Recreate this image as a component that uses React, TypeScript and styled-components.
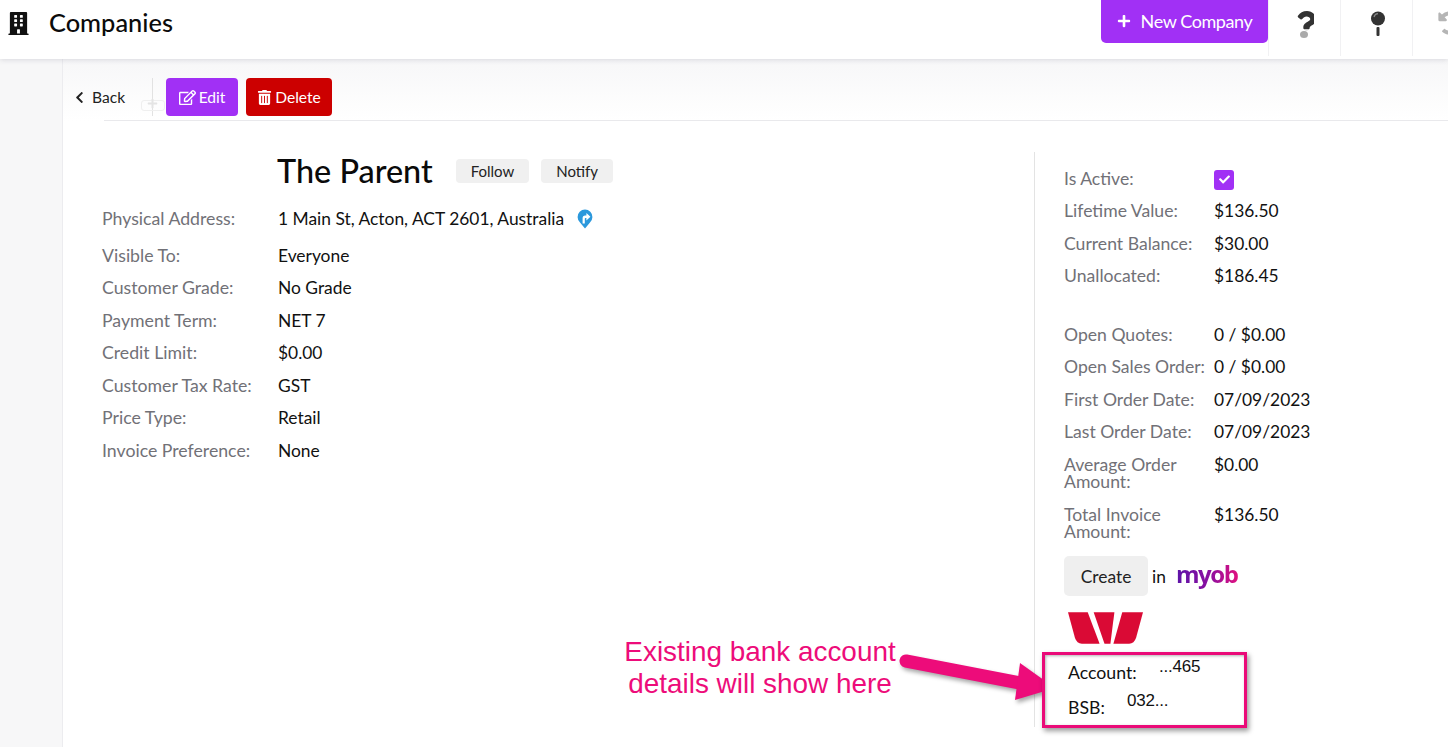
import React from "react";
import styled, { createGlobalStyle } from "styled-components";
import { FaBuilding, FaRegEdit, FaTrashAlt, FaChevronLeft, FaPlus, FaQuestion, FaUndoAlt, FaCheck } from "react-icons/fa";

const Global = createGlobalStyle`
  html, body { margin: 0; padding: 0; background: #f7f7f8; }
  body { font-family: Lato, "Liberation Sans", sans-serif; color: #111; overflow: hidden; }
  * { box-sizing: border-box; }
`;

const Page = styled.div`
  position: relative;
  width: 1448px;
  height: 747px;
  overflow: hidden;
  display: flex;
  flex-direction: column;
`;

const Header = styled.header`
  height: 59px;
  flex: none;
  background: #fff;
  box-shadow: 0 1px 5px rgba(60, 60, 90, 0.16);
  display: flex;
  align-items: flex-start;
  padding-left: 7px;
  position: relative;
  z-index: 2;
`;

const BrandIcon = styled.div`
  width: 20px;
  margin-top: 12px;
  font-size: 23px;
  line-height: 0;
  color: #111;
`;

const Title = styled.h1`
  margin: 7px 0 0 22px;
  font-size: 25.4px;
  line-height: 30px;
  font-weight: 500;
  color: #0b0b0b;
  flex: 1;
`;

const NewButton = styled.button`
  width: 167px;
  height: 43px;
  flex: none;
  border: 0;
  border-radius: 0 0 5px 5px;
  background: #a130f5;
  color: #fff;
  font: 400 18px Lato, sans-serif;
  letter-spacing: -0.4px;
  display: flex;
  align-items: center;
  justify-content: center;
  gap: 10px;
  padding: 0 0 2px;
`;

const HeaderCell = styled.div<{ $tone: string; $clip?: boolean }>`
  width: ${p => (p.$clip ? 36 : 72)}px;
  flex: none;
  height: 56px;
  border-left: 1px solid #f1f1f3;
  display: flex;
  justify-content: ${p => (p.$clip ? "flex-start" : "center")};
  padding: ${p => (p.$clip ? "11px 0 0 25px" : "11px 0 0 0")};
  color: ${p => p.$tone};
  font-size: 25px;
  line-height: 0;
  align-items: flex-start;
  overflow: hidden;
  & > svg { flex: none; }
`;

const QuestionStack = styled.div`
  position: relative;
  width: 19px;
  height: 27px;
  overflow: hidden;
`;

const QuestionDot = styled.span`
  position: absolute;
  left: 5px;
  bottom: 0;
  width: 8px;
  height: 7px;
  border-radius: 50%;
  background: #aaa;
`;

const Body = styled.div`
  flex: 1;
  display: flex;
  min-height: 0;
`;

const Gutter = styled.div`
  width: 62px;
  flex: none;
  background: #f7f7f8;
`;

const Panel = styled.main`
  flex: 1;
  background: #fff;
  border-left: 1px solid #ececef;
  display: flex;
  flex-direction: column;
  min-width: 0;
`;

const Toolbar = styled.div`
  height: 62px;
  flex: none;
  position: relative;
  background: linear-gradient(#f7f7f8, #ffffff);
  display: flex;
  align-items: flex-start;
  padding: 19px 0 0 10px;
`;

const ToolbarRule = styled.div`
  position: absolute;
  left: 41px;
  right: 0;
  bottom: 0;
  border-bottom: 1px solid #e9e9ec;
`;

const BackLink = styled.div`
  width: 93px;
  height: 38px;
  display: flex;
  align-items: center;
  gap: 6px;
  font-size: 15.6px;
  color: #222;
  position: relative;
`;

const GhostDivider = styled.span`
  position: absolute;
  left: 79px;
  top: 0;
  height: 38px;
  border-left: 1px solid #e2e2e2;
`;

const GhostBox = styled.span`
  position: absolute;
  left: 68px;
  top: 22px;
  width: 24px;
  height: 11px;
  border: 1px solid #efefef;
  border-radius: 3px;
`;

const GhostPlus = styled.span`
  position: absolute;
  left: 74px;
  top: 20px;
  color: #e4e4e4;
  font-size: 11px;
  line-height: 0;
`;

const ActionButton = styled.button<{ $bg: string; $w: number }>`
  width: ${p => p.$w}px;
  height: 38px;
  margin-right: 8px;
  border: 0;
  border-radius: 4px;
  background: ${p => p.$bg};
  color: #fff;
  font: 400 15.6px Lato, sans-serif;
  display: flex;
  align-items: center;
  justify-content: center;
  gap: 3px;
  padding: 0;
`;

const Content = styled.div`
  flex: 1;
  display: flex;
  min-height: 0;
`;

const LeftColumn = styled.section`
  width: 971px;
  flex: none;
  padding: 31px 0 0 39px;
`;

const NameRow = styled.div`
  display: flex;
  align-items: center;
  height: 38px;
  margin: 0 0 8.5px 175px;
`;

const Name = styled.h2`
  margin: 0 23px 0 0;
  font-size: 32.4px;
  line-height: 38px;
  font-weight: 500;
  color: #0a0a0a;
`;

const Pill = styled.button`
  height: 24px;
  margin-right: 12px;
  padding: 0 15px;
  border: 0;
  border-radius: 4px;
  background: #f0f0f0;
  color: #222;
  font: 400 15px Lato, sans-serif;
`;

const DetailRow = styled.div<{ $tall?: boolean }>`
  display: flex;
  align-items: center;
  height: ${p => (p.$tall ? 40.5 : 32.5)}px;
`;

const DetailLabel = styled.span`
  width: 176px;
  flex: none;
  font-size: 17.7px;
  color: #717177;
`;

const DetailValue = styled.span`
  color: #111;
  font-size: 17.4px;
  display: flex;
  align-items: center;
  gap: 13px;
`;

const RightColumn = styled.aside`
  height: 575px;
  margin-top: 31px;
  border-left: 1px solid #e3e3e3;
  padding: 10px 0 0 29px;
  flex: 1;
`;

const StatRow = styled.div<{ $h?: number; $gap?: number }>`
  display: flex;
  align-items: ${p => (p.$h ? "flex-start" : "center")};
  height: ${p => p.$h ?? 32.5}px;
  margin-top: ${p => p.$gap ?? 0}px;
`;

const StatLabel = styled.span<{ $wrap?: boolean }>`
  width: 150px;
  flex: none;
  color: #717177;
  font-size: 17.6px;
  line-height: 17px;
  padding-top: ${p => (p.$wrap ? 8 : 0)}px;
`;

const StatValue = styled.span<{ $wrap?: boolean }>`
  color: #111;
  font-size: 17.4px;
  line-height: 17px;
  padding-top: ${p => (p.$wrap ? 8 : 0)}px;
`;

const Checkbox = styled.span`
  width: 20px;
  height: 20px;
  margin-top: 3px;
  border-radius: 3px;
  background: #a130f5;
  color: #fff;
  font-size: 11px;
  display: flex;
  align-items: center;
  justify-content: center;
`;

const CreateRow = styled.div`
  display: flex;
  align-items: center;
  margin-top: 8px;
  height: 40px;
  font-size: 17.4px;
`;

const CreateButton = styled.button`
  width: 84px;
  height: 40px;
  border: 0;
  border-radius: 5px;
  background: #efefef;
  color: #222;
  font: 400 17.4px Lato, sans-serif;
  margin-right: 4px;
`;

const Myob = styled.span`
  margin-left: 10px;
  margin-top: -4px;
  font: 700 24px/30px "Open Sans", sans-serif;
  letter-spacing: -1.4px;
  background: linear-gradient(90deg, #5d14a8 0%, #8c0fa0 55%, #e0117f 100%);
  -webkit-background-clip: text;
  background-clip: text;
  color: transparent;
`;

const WestpacLogo = styled.svg`
  display: block;
  margin: 16px 0 0 4px;
`;

const CalloutBox = styled.div`
  position: absolute;
  left: 1042px;
  top: 652px;
  width: 205px;
  height: 76px;
  border: 3px solid #ea0a78;
  background: #fff;
  box-shadow: 2px 3px 5px rgba(0, 0, 0, 0.4), inset 1px 1px 3px rgba(0, 0, 0, 0.3);
  color: #111;
`;

const CalloutText = styled.span<{ $x: number; $y: number; $font: string; $size?: number }>`
  position: absolute;
  left: ${p => p.$x}px;
  top: ${p => p.$y}px;
  font-family: ${p => p.$font};
  font-size: ${p => p.$size ?? 17.7}px;
  line-height: 20px;
  letter-spacing: ${p => (p.$size ? "-0.2px" : "0")};
  white-space: nowrap;
`;

const Annotation = styled.div`
  position: absolute;
  left: 600px;
  top: 636px;
  width: 320px;
  text-align: center;
  font: 400 27.9px/32px "Liberation Sans", Arial, sans-serif;
  color: #ed0c7a;
`;

const ArrowSvg = styled.svg`
  position: absolute;
  left: 895px;
  top: 645px;
  overflow: visible;
  filter: drop-shadow(2px 3px 2px rgba(0, 0, 0, 0.35));
`;

const left: [string, string][] = [
  ["Visible To:", "Everyone"],
  ["Customer Grade:", "No Grade"],
  ["Payment Term:", "NET 7"],
  ["Credit Limit:", "$0.00"],
  ["Customer Tax Rate:", "GST"],
  ["Price Type:", "Retail"],
  ["Invoice Preference:", "None"],
];

const stats1: [string, string][] = [
  ["Lifetime Value:", "$136.50"],
  ["Current Balance:", "$30.00"],
  ["Unallocated:", "$186.45"],
];

const stats2: [string, string][] = [
  ["Open Sales Order:", "0 / $0.00"],
  ["First Order Date:", "07/09/2023"],
  ["Last Order Date:", "07/09/2023"],
];

const DirectionPin = () => (
  <svg width="16" height="20" viewBox="0 0 16 20">
    <path d="M8 19.5 L3 13.4 A7.4 7.4 0 1 1 13 13.4 Z" fill="#2b98dc" />
    <path d="M5.6 14.5 V9.2 A2.6 2.6 0 0 1 8.2 6.6 H9.4 V4 L13.4 7.8 L9.4 11.4 V9 H8.6 A0.8 0.8 0 0 0 7.8 9.8 V14.5 Z" fill="#fff" />
  </svg>
);

const PinIcon = () => (
  <svg width="16" height="25" viewBox="0 0 16 25" style={{ marginLeft: 2 }}>
    <circle cx="8" cy="7.5" r="7" fill="#333" />
    <path d="M4 6 A4.5 4.5 0 0 1 8 2.6" stroke="#888" strokeWidth="1.2" fill="none" />
    <rect x="6.5" y="16" width="3" height="9" rx="1" fill="#333" />
  </svg>
);

export default function App() {
  return (
    <Page>
      <Global />
      <Header>
        <BrandIcon><FaBuilding /></BrandIcon>
        <Title>Companies</Title>
        <NewButton><FaPlus size={14} />New Company</NewButton>
        <HeaderCell $tone="#333">
          <QuestionStack>
            <FaQuestion size={27} style={{ marginLeft: -2, clipPath: "inset(0 0 28% 0)" }} />
            <QuestionDot />
          </QuestionStack>
        </HeaderCell>
        <HeaderCell $tone="#333"><PinIcon /></HeaderCell>
        <HeaderCell $tone="#b5b5b5" $clip><FaUndoAlt size={24} /></HeaderCell>
      </Header>
      <Body>
        <Gutter />
        <Panel>
          <Toolbar>
            <ToolbarRule />
            <BackLink>
              <FaChevronLeft size={13} />Back
              <GhostDivider />
              <GhostBox />
              <GhostPlus><FaPlus /></GhostPlus>
            </BackLink>
            <ActionButton $bg="#a130f5" $w={72}><FaRegEdit size={17} />Edit</ActionButton>
            <ActionButton $bg="#cc0000" $w={86}><FaTrashAlt size={15} />Delete</ActionButton>
          </Toolbar>
          <Content>
            <LeftColumn>
              <NameRow>
                <Name>The Parent</Name>
                <Pill>Follow</Pill>
                <Pill>Notify</Pill>
              </NameRow>
              <DetailRow $tall>
                <DetailLabel>Physical Address:</DetailLabel>
                <DetailValue>1 Main St, Acton, ACT 2601, Australia <DirectionPin /></DetailValue>
              </DetailRow>
              {left.map(([k, v]) => (
                <DetailRow key={k}>
                  <DetailLabel>{k}</DetailLabel>
                  <DetailValue>{v}</DetailValue>
                </DetailRow>
              ))}
            </LeftColumn>
            <RightColumn>
              <StatRow>
                <StatLabel>Is Active:</StatLabel>
                <Checkbox><FaCheck /></Checkbox>
              </StatRow>
              {stats1.map(([k, v]) => (
                <StatRow key={k}>
                  <StatLabel>{k}</StatLabel>
                  <StatValue>{v}</StatValue>
                </StatRow>
              ))}
              <StatRow $gap={26}>
                <StatLabel>Open Quotes:</StatLabel>
                <StatValue>0 / $0.00</StatValue>
              </StatRow>
              {stats2.map(([k, v]) => (
                <StatRow key={k}>
                  <StatLabel>{k}</StatLabel>
                  <StatValue>{v}</StatValue>
                </StatRow>
              ))}
              <StatRow $h={50}>
                <StatLabel $wrap>Average Order<br />Amount:</StatLabel>
                <StatValue $wrap>$0.00</StatValue>
              </StatRow>
              <StatRow $h={50}>
                <StatLabel $wrap>Total Invoice<br />Amount:</StatLabel>
                <StatValue $wrap>$136.50</StatValue>
              </StatRow>
              <CreateRow>
                <CreateButton>Create</CreateButton>
                in
                <Myob>myob</Myob>
              </CreateRow>
              <WestpacLogo width="75" height="32" viewBox="0 0 76 32">
                <path d="M0 0 H20 L32 32 H14 Q9 32 7 26 Z" fill="#da0a35" />
                <path d="M26 0 H47 L43 32 H37 Z" fill="#da0a35" />
                <path d="M55 0 H76 L69 26 Q67 32 62 32 H46 Z" fill="#da0a35" />
              </WestpacLogo>
            </RightColumn>
          </Content>
        </Panel>
      </Body>
      <Annotation>Existing bank account<br />details will show here</Annotation>
      <ArrowSvg width="170" height="70" viewBox="0 0 170 70">
        <path d="M11 16 L125 38" stroke="#ed0c7a" strokeWidth="13" strokeLinecap="round" fill="none" />
        <path d="M125 18 L160 43 L120 55 Z" fill="#ed0c7a" />
      </ArrowSvg>
      <CalloutBox>
        <CalloutText $x={23} $y={8} $font="Lato, sans-serif">Account:</CalloutText>
        <CalloutText $x={114} $y={2} $font='"Liberation Sans", sans-serif' $size={17}>...465</CalloutText>
        <CalloutText $x={23} $y={43} $font="Lato, sans-serif">BSB:</CalloutText>
        <CalloutText $x={82} $y={36} $font='"Liberation Sans", sans-serif' $size={17}>032...</CalloutText>
      </CalloutBox>
    </Page>
  );
}
